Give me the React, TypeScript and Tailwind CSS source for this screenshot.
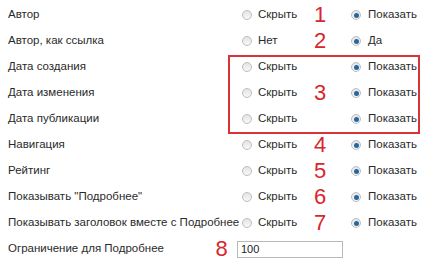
const rows: {
  label: string;
  a?: string;
  b?: string;
  num?: string;
}[] = [
  { label: "Автор", a: "Скрыть", b: "Показать", num: "1" },
  { label: "Автор, как ссылка", a: "Нет", b: "Да", num: "2" },
  { label: "Дата создания", a: "Скрыть", b: "Показать" },
  { label: "Дата изменения", a: "Скрыть", b: "Показать", num: "3" },
  { label: "Дата публикации", a: "Скрыть", b: "Показать" },
  { label: "Навигация", a: "Скрыть", b: "Показать", num: "4" },
  { label: "Рейтинг", a: "Скрыть", b: "Показать", num: "5" },
  { label: 'Показывать "Подробнее"', a: "Скрыть", b: "Показать", num: "6" },
  { label: "Показывать заголовок вместе с Подробнее", a: "Скрыть", b: "Показать", num: "7" },
];

function Radio({ checked }: { checked?: boolean }) {
  return (
    <span className="flex h-[10px] w-[10px] shrink-0 items-center justify-center rounded-full border border-[#bdbdbd] bg-gradient-to-b from-[#e4e4e4] to-[#f8f8f8]">
      {checked && <span className="h-[5px] w-[5px] rounded-full bg-[#2369a0]" />}
    </span>
  );
}

function Num({ n }: { n?: string }) {
  return (
    <span className="w-[30px] text-center text-[22px] leading-none text-[#d8262e]">{n}</span>
  );
}

export default function App() {
  return (
    <main
      className="relative h-[260px] w-[424px] overflow-hidden bg-white pt-[2px] text-[11.5px] text-[#2a2a2a]"
      style={{ fontFamily: '"Liberation Sans", Arial, sans-serif' }}
    >
      {rows.map((r) => (
        <div key={r.label} className="flex h-[26px] items-center">
          <div className="w-[242px] pl-[8px] whitespace-nowrap">{r.label}</div>
          <label className="flex w-[63px] items-center gap-[6px]">
            <Radio />
            <span>{r.a}</span>
          </label>
          <Num n={r.num} />
          <label className="ml-[16px] flex items-center gap-[7px]">
            <Radio checked />
            <span>{r.b}</span>
          </label>
        </div>
      ))}
      <div className="flex h-[26px] items-center">
        <div className="w-[206px] pl-[8px] whitespace-nowrap">Ограничение для Подробнее</div>
        <span className="w-[31px] text-center text-[22px] leading-none text-[#d8262e]">8</span>
        <input
          readOnly
          value="100"
          className="h-[17px] w-[106px] border border-[#b9b9b9] px-[3px] text-[11px] text-[#222] outline-none"
        />
      </div>
      <div className="pointer-events-none absolute left-[228px] top-[55px] h-[79px] w-[192px] border-2 border-[#d9333a]" />
    </main>
  );
}
